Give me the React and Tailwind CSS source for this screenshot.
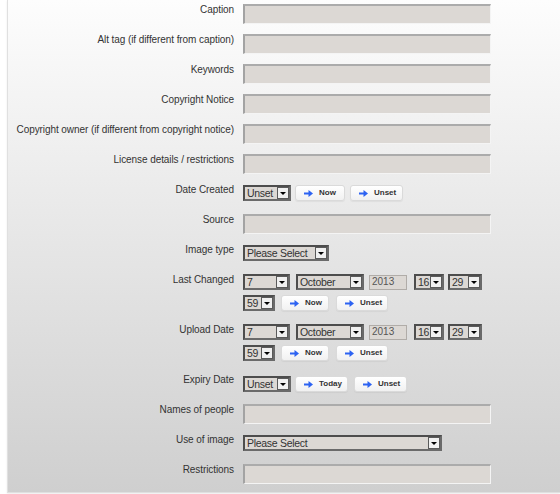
import React from "react";

const font = { fontFamily: '"Liberation Sans", Arial, sans-serif' };

function Arrow() {
  return (
    <svg width="9" height="7" viewBox="0 0 9 7" className="shrink-0">
      <rect x="0" y="2.5" width="5.5" height="2" fill="#2d63f2" />
      <polygon points="4.5,0 9,3.5 4.5,7" fill="#2d63f2" />
    </svg>
  );
}

function Btn({ label, w }) {
  return (
    <div
      className={`flex h-[16px] items-center gap-[6px] rounded-[3px] border border-[#dadada] bg-gradient-to-b from-white to-[#f1f1f1] pl-[8px] text-[8px] font-bold text-[#333] shadow-[0_1px_1px_rgba(0,0,0,0.05)] ${w}`}
    >
      <Arrow />
      <span className="leading-none">{label}</span>
    </div>
  );
}

function Select({ value, w }) {
  return (
    <div
      className={`flex h-[16px] items-stretch border-2 border-t-[#4d4d4d] border-l-[#4d4d4d] border-b-[#6a6a6a] border-r-[#6a6a6a] bg-[#dcd8d4] ${w}`}
    >
      <div className="flex flex-1 items-center overflow-hidden pl-[2px] text-[10.5px] leading-none tracking-[-0.3px] text-[#333] whitespace-nowrap">
        {value}
      </div>
      <div className="flex w-[12px] items-center justify-center border border-[#5a5a5a] bg-[#f0f0f0]">
        <div className="h-0 w-0 border-l-[3px] border-r-[3px] border-t-[3px] border-l-transparent border-r-transparent border-t-black" />
      </div>
    </div>
  );
}

function TextInput() {
  return (
    <div className="h-[20px] w-[248px] border-t-2 border-l-2 border-b border-r border-t-[#ababab] border-l-[#a3a3a3] border-b-[#f4f4f4] border-r-[#f4f4f4] bg-[#dcd8d4]" />
  );
}

function Row({ label, h = "h-[30px]", children }) {
  return (
    <div className={`flex ${h}`}>
      <div className="w-[226px] text-right text-[10px] leading-[12px] tracking-[-0.08px] text-[#333]">
        {label}
      </div>
      <div className="ml-[9px] flex flex-col">{children}</div>
    </div>
  );
}

function DateTimeRow({ label }) {
  return (
    <Row label={label} h="h-[50px]">
      <div className="flex items-center">
        <Select value="7" w="w-[47px]" />
        <div className="ml-[6px]">
          <Select value="October" w="w-[68px]" />
        </div>
        <div className="ml-[5px] flex h-[15px] w-[38px] items-center border border-[#b0aca8] bg-[#dcd8d4] pl-[2px] text-[10px] leading-none text-[#555]">
          2013
        </div>
        <div className="ml-[7px]">
          <Select value="16" w="w-[30px]" />
        </div>
        <div className="ml-[4px]">
          <Select value="29" w="w-[34px]" />
        </div>
      </div>
      <div className="mt-[5px] flex items-center">
        <Select value="59" w="w-[32px]" />
        <div className="ml-[6px]">
          <Btn label="Now" w="w-[48px]" />
        </div>
        <div className="ml-[7px]">
          <Btn label="Unset" w="w-[52px]" />
        </div>
      </div>
    </Row>
  );
}

export default function App() {
  return (
    <div className="h-[494px] w-[560px] bg-white" style={font}>
      <div className="ml-[7px] h-[493px] w-[553px] border-l border-b border-[#e0e0e0] bg-gradient-to-b from-[#fdfdfd] to-[#cfcfcf] pt-[4px] shadow-[0_1px_2px_rgba(0,0,0,0.08)]">
        <Row label="Caption"><TextInput /></Row>
        <Row label="Alt tag (if different from caption)"><TextInput /></Row>
        <Row label="Keywords"><TextInput /></Row>
        <Row label="Copyright Notice"><TextInput /></Row>
        <Row label="Copyright owner (if different from copyright notice)"><TextInput /></Row>
        <Row label="License details / restrictions"><TextInput /></Row>
        <Row label="Date Created">
          <div className="mt-[1px] flex items-center">
            <Select value="Unset" w="w-[48px]" />
            <div className="ml-[4px]"><Btn label="Now" w="w-[50px]" /></div>
            <div className="ml-[5px]"><Btn label="Unset" w="w-[53px]" /></div>
          </div>
        </Row>
        <Row label="Source"><TextInput /></Row>
        <Row label="Image type">
          <div className="mt-[1px]">
            <Select value="Please Select" w="w-[86px]" />
          </div>
        </Row>
        <DateTimeRow label="Last Changed" />
        <DateTimeRow label="Upload Date" />
        <Row label="Expiry Date">
          <div className="mt-[2px] flex items-center">
            <Select value="Unset" w="w-[48px]" />
            <div className="ml-[4px]"><Btn label="Today" w="w-[53px]" /></div>
            <div className="ml-[6px]"><Btn label="Unset" w="w-[53px]" /></div>
          </div>
        </Row>
        <Row label="Names of people"><TextInput /></Row>
        <Row label="Use of image">
          <div className="mt-[1px]">
            <Select value="Please Select" w="w-[199px]" />
          </div>
        </Row>
        <Row label="Restrictions"><TextInput /></Row>
      </div>
    </div>
  );
}
